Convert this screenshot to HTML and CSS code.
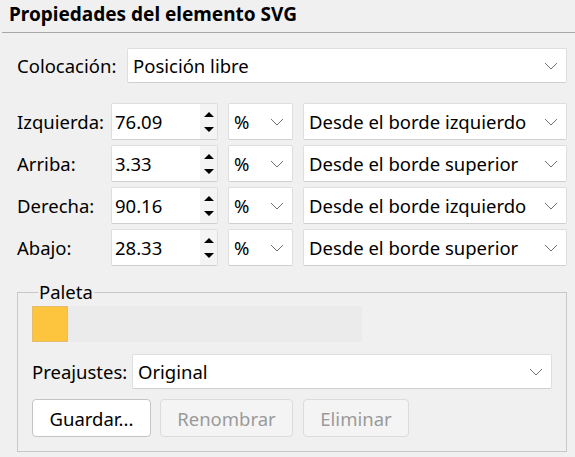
FILE: index.html
```html
<!DOCTYPE html>
<html lang="es">
<head>
  <meta charset="UTF-8">
  <title>Propiedades del elemento SVG</title>
  <link rel="stylesheet" href="styles.css">
</head>
<body>
  <div class="header">Propiedades del elemento SVG</div>

  <div class="content">
    <div class="place-row">
      <span class="lbl">Colocación:</span>
      <div class="combo grow">
        <span>Posición libre</span>
        <svg class="chev" width="14" height="8" viewBox="0 0 14 8"><path d="M1 1 L7 7 L13 1" fill="none" stroke="#707070" stroke-width="1"/></svg>
      </div>
    </div>

    <div class="grid">
      <span class="lbl">Izquierda:</span>
      <div class="spin"><span>76.09</span><div class="arrows"><svg width="12" height="24" viewBox="0 0 12 24"><path d="M1 7 L6 2 L11 7 Z M1 17 L11 17 L6 22 Z" fill="#000"/></svg></div></div>
      <div class="combo"><span>%</span><svg class="chev" width="14" height="8" viewBox="0 0 14 8"><path d="M1 1 L7 7 L13 1" fill="none" stroke="#707070" stroke-width="1"/></svg></div>
      <div class="combo"><span>Desde el borde izquierdo</span><svg class="chev" width="14" height="8" viewBox="0 0 14 8"><path d="M1 1 L7 7 L13 1" fill="none" stroke="#707070" stroke-width="1"/></svg></div>

      <span class="lbl">Arriba:</span>
      <div class="spin"><span>3.33</span><div class="arrows"><svg width="12" height="24" viewBox="0 0 12 24"><path d="M1 7 L6 2 L11 7 Z M1 17 L11 17 L6 22 Z" fill="#000"/></svg></div></div>
      <div class="combo"><span>%</span><svg class="chev" width="14" height="8" viewBox="0 0 14 8"><path d="M1 1 L7 7 L13 1" fill="none" stroke="#707070" stroke-width="1"/></svg></div>
      <div class="combo"><span>Desde el borde superior</span><svg class="chev" width="14" height="8" viewBox="0 0 14 8"><path d="M1 1 L7 7 L13 1" fill="none" stroke="#707070" stroke-width="1"/></svg></div>

      <span class="lbl">Derecha:</span>
      <div class="spin"><span>90.16</span><div class="arrows"><svg width="12" height="24" viewBox="0 0 12 24"><path d="M1 7 L6 2 L11 7 Z M1 17 L11 17 L6 22 Z" fill="#000"/></svg></div></div>
      <div class="combo"><span>%</span><svg class="chev" width="14" height="8" viewBox="0 0 14 8"><path d="M1 1 L7 7 L13 1" fill="none" stroke="#707070" stroke-width="1"/></svg></div>
      <div class="combo"><span>Desde el borde izquierdo</span><svg class="chev" width="14" height="8" viewBox="0 0 14 8"><path d="M1 1 L7 7 L13 1" fill="none" stroke="#707070" stroke-width="1"/></svg></div>

      <span class="lbl">Abajo:</span>
      <div class="spin"><span>28.33</span><div class="arrows"><svg width="12" height="24" viewBox="0 0 12 24"><path d="M1 7 L6 2 L11 7 Z M1 17 L11 17 L6 22 Z" fill="#000"/></svg></div></div>
      <div class="combo"><span>%</span><svg class="chev" width="14" height="8" viewBox="0 0 14 8"><path d="M1 1 L7 7 L13 1" fill="none" stroke="#707070" stroke-width="1"/></svg></div>
      <div class="combo"><span>Desde el borde superior</span><svg class="chev" width="14" height="8" viewBox="0 0 14 8"><path d="M1 1 L7 7 L13 1" fill="none" stroke="#707070" stroke-width="1"/></svg></div>
    </div>

    <fieldset class="palette">
      <legend>Paleta</legend>
      <div class="swatches">
        <div class="swatch"></div>
      </div>
      <div class="preset-row">
        <span class="lbl">Preajustes:</span>
        <div class="combo grow"><span>Original</span><svg class="chev" width="14" height="8" viewBox="0 0 14 8"><path d="M1 1 L7 7 L13 1" fill="none" stroke="#707070" stroke-width="1"/></svg></div>
      </div>
      <div class="buttons">
        <button class="btn save">Guardar...</button>
        <button class="btn rename" disabled>Renombrar</button>
        <button class="btn delete" disabled>Eliminar</button>
      </div>
    </fieldset>
  </div>
</body>
</html>
```

FILE: styles.css
```css
* { margin: 0; padding: 0; box-sizing: border-box; }
body {
  background: #f0f0f0;
  font-family: "Noto Sans", "Open Sans", sans-serif;
  font-size: 18.5px; color: #000;
  width: 575px; height: 457px; overflow: hidden;
}
.header {
  height: 33px; padding: 1px 0 0 7px;
  font-weight: bold; font-size: 19px;
  border-bottom: 1px solid #a8a8a8;
  margin-left: 2px;
}
.content { padding: 15px 8px 0 17px; }

.place-row { display: flex; align-items: center; height: 35px; }
.place-row .lbl { width: 110px; }
.grow { flex: 1; }

.combo, .spin {
  background: #fff;
  border: 1px solid #dedede; border-bottom-color: #cfcfcf;
  border-radius: 2px;
  display: flex; align-items: center;
  padding-left: 5px; height: 100%;
}
.combo span { flex: 1; white-space: nowrap; }
.chev { margin-right: 8px; flex: none; }

.grid {
  display: grid;
  grid-template-columns: 84px 107px 65px 1fr;
  grid-auto-rows: 37px;
  column-gap: 10px; row-gap: 5px;
  margin-top: 20px; align-items: center;
}
.grid > * { height: 100%; }
.grid .lbl { display: flex; align-items: center; }
.spin { padding-left: 3px; }
.spin span { flex: 1; }
.arrows {
  width: 17px; height: 100%;
  display: flex; align-items: center; justify-content: center;
  background: #f4f4f4;
}

.palette {
  margin-top: 14px;
  border: 1px solid #c8c8c8;
  padding: 2px 14px 14px 14px;
}
.palette legend { margin-left: 6px; padding: 0 1px; line-height: 24px; }
.swatches {
  width: 330px; height: 36px; background: #ebebeb;
  display: flex;
}
.swatch { width: 36px; height: 36px; background: #fdc43d; border: 1px solid #e4be6a; }

.preset-row { display: flex; align-items: center; height: 35px; margin-top: 12px; }
.preset-row .lbl { width: 100px; }

.buttons { display: flex; gap: 9px; margin-top: 10px; }
.btn {
  height: 38px; font: inherit; color: #000;
  background: #fff; border: 1px solid #c4c4c4; border-radius: 4px;
}
.btn:disabled { background: #f4f4f4; border-color: #dcdcdc; color: #9a9a9a; }
.save { width: 119px; }
.rename { width: 133px; }
.delete { width: 106px; margin-left: 1px; }
```
